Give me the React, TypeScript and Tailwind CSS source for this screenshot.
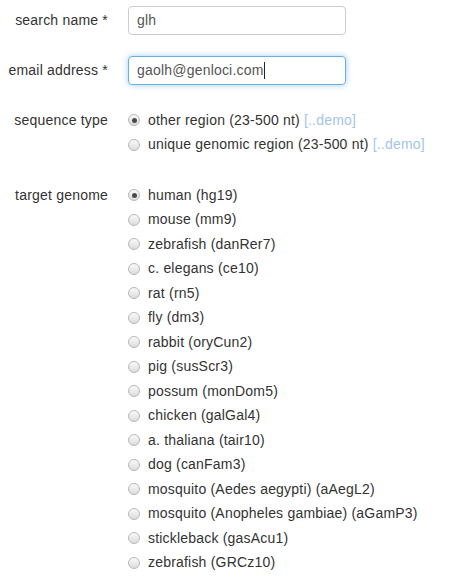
const genomes = [
  'human (hg19)',
  'mouse (mm9)',
  'zebrafish (danRer7)',
  'c. elegans (ce10)',
  'rat (rn5)',
  'fly (dm3)',
  'rabbit (oryCun2)',
  'pig (susScr3)',
  'possum (monDom5)',
  'chicken (galGal4)',
  'a. thaliana (tair10)',
  'dog (canFam3)',
  'mosquito (Aedes aegypti) (aAegL2)',
  'mosquito (Anopheles gambiae) (aGamP3)',
  'stickleback (gasAcu1)',
  'zebrafish (GRCz10)',
];

function Radio({ checked }: { checked?: boolean }) {
  return (
    <span className="flex items-center justify-center w-[12px] h-[12px] rounded-full border border-[#b8b8b8] bg-gradient-to-b from-[#fafafa] to-[#dcdcdc] shrink-0">
      {checked && <span className="w-[5px] h-[5px] rounded-full bg-[#4a4a4a]" />}
    </span>
  );
}

function RadioRow({ label, checked, demo }: { label: string; checked?: boolean; demo?: boolean }) {
  return (
    <div className="flex items-center h-[24.5px]">
      <Radio checked={checked} />
      <span className="ml-[8px] text-[#333]">{label}</span>
      {demo && <span className="ml-[4px] text-[#a3c6e8]">[..demo]</span>}
    </div>
  );
}

export default function App() {
  return (
    <div
      className="w-[461px] h-[582px] bg-white text-[14px] tracking-[0.2px] text-[#333] overflow-hidden"
      style={{ fontFamily: '"Liberation Sans", Arial, sans-serif' }}
    >
      {/* search name */}
      <div className="flex items-center mt-[6px]">
        <label className="w-[108px] text-right">search name *</label>
        <div className="ml-[20px] w-[218px] h-[29px] border border-[#ccc] rounded-[4px] flex items-center px-[8px] text-[#555]">
          glh
        </div>
      </div>

      {/* email */}
      <div className="flex items-center mt-[21px]">
        <label className="w-[108px] text-right">email address *</label>
        <div className="ml-[20px] w-[218px] h-[29px] border border-[#66afe9] rounded-[4px] flex items-center px-[8px] text-[#555] shadow-[0_0_6px_rgba(102,175,233,0.6)]">
          gaolh@genloci.com
          <span className="w-px h-[17px] bg-[#222]" />
        </div>
      </div>

      {/* sequence type */}
      <div className="flex mt-[23px]">
        <label className="w-[108px] text-right h-[24.5px] flex items-center justify-end">sequence type</label>
        <div className="ml-[20px]">
          <RadioRow label="other region (23-500 nt)" checked demo />
          <RadioRow label="unique genomic region (23-500 nt)" demo />
        </div>
      </div>

      {/* target genome */}
      <div className="flex mt-[26px]">
        <label className="w-[108px] text-right h-[24.5px] flex items-center justify-end">target genome</label>
        <div className="ml-[20px]">
          {genomes.map((g, i) => (
            <RadioRow key={g} label={g} checked={i === 0} />
          ))}
        </div>
      </div>
    </div>
  );
}
